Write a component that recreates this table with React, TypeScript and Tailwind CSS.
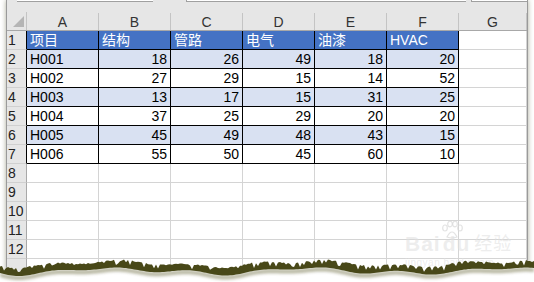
import React from "react";

const columns = [
  { letter: "A", w: "w-[72px]" },
  { letter: "B", w: "w-[72px]" },
  { letter: "C", w: "w-[72px]" },
  { letter: "D", w: "w-[72px]" },
  { letter: "E", w: "w-[72px]" },
  { letter: "F", w: "w-[72px]" },
  { letter: "G", w: "w-[68px]" },
];

const table: string[][] = [
  ["项目", "结构", "管路", "电气", "油漆", "HVAC"],
  ["H001", "18", "26", "49", "18", "20"],
  ["H002", "27", "29", "15", "14", "52"],
  ["H003", "13", "17", "15", "31", "25"],
  ["H004", "37", "25", "29", "20", "20"],
  ["H005", "45", "49", "48", "43", "15"],
  ["H006", "55", "50", "45", "60", "10"],
];

// torn paper edge along the bottom
let seed = 11;
const rnd = () => {
  seed = (seed * 9301 + 49297) % 233280;
  return seed / 233280;
};
const top: string[] = [];
const bottom: string[] = [];
const shade: string[] = [];
for (let x = 0; x <= 534; x += 2) {
  const base = 15 + 2.5 * Math.sin(x / 31 + 1) + 1.6 * Math.sin(x / 11);
  const spike = rnd() < 0.35 ? rnd() * 6 : rnd() * 1.5;
  top.push(`${x},${(base - 4 + spike).toFixed(1)}`);
  const b = base + 4 + Math.sin(x / 17);
  bottom.push(`${x},${b.toFixed(1)}`);
  shade.push(`${x},${(b + 4).toFixed(1)}`);
}
const whitePath = `M0,32 L${top.join(" L")} L534,32 Z`;
const bandPath = `M${top.join(" L")} L${bottom.slice().reverse().join(" L")} Z`;
const shadowPath = `M${bottom.join(" L")} L${shade.slice().reverse().join(" L")} Z`;

const SheetRow = ({ n, row }: { n: number; row?: string[] }) => {
  const inTable = !!row;
  return (
    <div className="flex h-[19px]">
      <div
        className={`w-[20px] h-[19px] bg-[#e6e6e6] border-b border-[#d0d0d0] border-r pl-[1px] text-[#222] leading-[19px] ${
          inTable ? "border-r-black" : "border-r-[#a8a8a8]"
        }`}
      >
        {n <= 12 ? n : ""}
      </div>
      {columns.map((c, i) => {
        const value = row && i < 6 ? row[i] : "";
        if (row && i < 6) {
          const head = n === 1;
          const band = n % 2 === 0;
          return (
            <div
              key={c.letter}
              className={`${c.w} h-[19px] border-r border-b border-black leading-[18px] px-[3px] whitespace-nowrap ${
                head
                  ? "bg-[#4472c4] text-white"
                  : band
                  ? "bg-[#d9e1f2] text-black"
                  : "bg-white text-black"
              } ${!head && i > 0 ? "text-right" : "text-left"}`}
            >
              {value}
            </div>
          );
        }
        return (
          <div
            key={c.letter}
            className={`${c.w} h-[19px] border-r border-b border-[#d4d4d4] bg-white`}
          />
        );
      })}
    </div>
  );
};

export default function App() {
  return (
    <div className="relative w-[534px] h-[282px] bg-white overflow-hidden font-['Liberation_Sans','Noto_Sans_CJK_SC',sans-serif] text-[14px]">
      <div className="ml-[6px] w-[522px] h-[275px] bg-white border-l border-r border-[#9a9a9a] shadow-[0_0_5px_rgba(70,72,30,0.45)] overflow-hidden">
        {/* formula bar remains */}
        <div className="relative h-[13px] bg-[#e6e6e6]">
          <div className="flex h-[2px]">
            <div className="ml-[10px] w-[136px] bg-white border-b border-[#a0a0a0]" />
            <div className="ml-[33px] w-[280px] bg-white border-b border-l border-[#a0a0a0]" />
            <div className="ml-[5px] flex-1 bg-white border-b border-l border-[#a0a0a0]" />
          </div>
        </div>
        {/* column headers */}
        <div className="flex h-[19px] bg-[#e6e6e6] border-b border-[#a8a8a8] -mt-[1px]">
          <div className="relative w-[20px] h-[18px] border-r border-[#c4c4c4]">
            <svg className="absolute left-[6px] top-[4px]" width="11" height="11" viewBox="0 0 11 11">
              <polygon points="11,0 11,11 0,11" fill="#b5b5b5" />
            </svg>
          </div>
          {columns.map((c) => (
            <div
              key={c.letter}
              className={`${c.w} h-[18px] border-r border-[#c4c4c4] text-center text-[#333] leading-[20px]`}
            >
              {c.letter}
            </div>
          ))}
        </div>
        {Array.from({ length: 13 }, (_, i) => (
          <SheetRow key={i} n={i + 1} row={table[i]} />
        ))}
      </div>

      {/* watermark */}
      <div className="absolute left-[405px] top-[218px] text-[rgba(225,225,225,0.6)] pointer-events-none">
        <svg className="absolute left-[35px] top-[3px]" width="24" height="18" viewBox="0 0 24 18">
          <g fill="none" stroke="rgba(215,215,215,0.7)" strokeWidth="1.2">
            <ellipse cx="5" cy="7" rx="2.3" ry="3" />
            <ellipse cx="10" cy="3" rx="2.3" ry="2.8" />
            <ellipse cx="15" cy="3" rx="2.3" ry="2.8" />
            <ellipse cx="20" cy="7" rx="2.3" ry="3" />
            <path d="M7,16 Q12,6 17,16 Q12,18 7,16 Z" />
          </g>
        </svg>
        <div className="mt-[15px] flex items-end font-bold text-[21px] leading-[22px] tracking-[1px]">
          <span>Bai</span>
          <span className="ml-[2px]">du</span>
          <span className="ml-[4px] text-[18px] font-normal">经验</span>
        </div>
        <div className="mt-[2px] text-[10px] leading-[12px] tracking-[0.5px]">jingyan.baidu.com</div>
      </div>

      {/* torn edge */}
      <svg className="absolute left-0 top-[252px]" width="534" height="30" viewBox="0 0 534 30">
        <defs>
          <filter id="blur" x="-5%" y="-100%" width="110%" height="300%">
            <feGaussianBlur stdDeviation="1.8" />
          </filter>
        </defs>
        <path d={whitePath} fill="#ffffff" />
        <path d={shadowPath} fill="#5d5c2a" opacity="0.45" filter="url(#blur)" />
        <path d={bandPath} fill="#484818" />
      </svg>
    </div>
  );
}
